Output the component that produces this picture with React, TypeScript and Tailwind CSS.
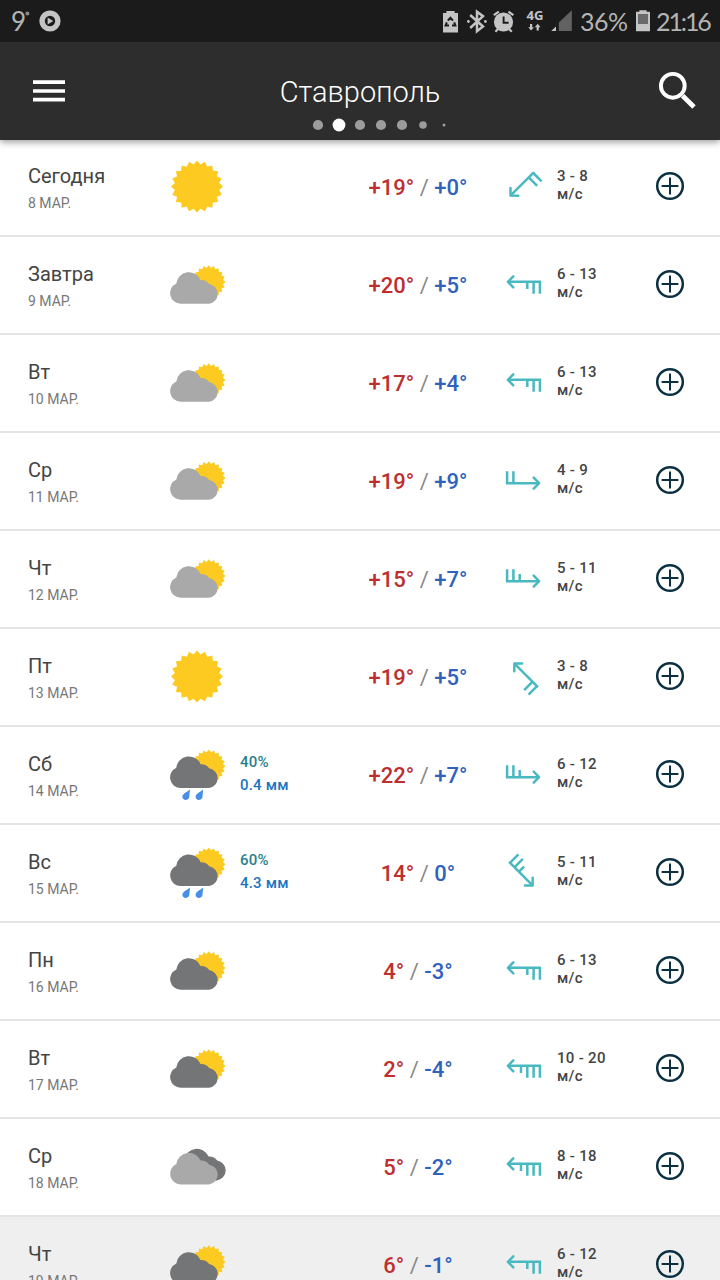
import React from "react";

type Icon = "sun" | "cloudLight" | "cloudDark" | "rain" | "clouds";

interface Day {
  name: string;
  date: string;
  icon: Icon;
  hi: string;
  lo: string;
  angle: number;
  barbs: number;
  half?: boolean;
  wind: string;
  chance?: string;
  amount?: string;
}

const days: Day[] = [
  { name: "Сегодня", date: "8 МАР.", icon: "sun", hi: "+19°", lo: "+0°", angle: -45, barbs: 2, wind: "3 - 8" },
  { name: "Завтра", date: "9 МАР.", icon: "cloudLight", hi: "+20°", lo: "+5°", angle: 0, barbs: 2, half: true, wind: "6 - 13" },
  { name: "Вт", date: "10 МАР.", icon: "cloudLight", hi: "+17°", lo: "+4°", angle: 0, barbs: 2, half: true, wind: "6 - 13" },
  { name: "Ср", date: "11 МАР.", icon: "cloudLight", hi: "+19°", lo: "+9°", angle: 180, barbs: 2, wind: "4 - 9" },
  { name: "Чт", date: "12 МАР.", icon: "cloudLight", hi: "+15°", lo: "+7°", angle: 180, barbs: 2, half: true, wind: "5 - 11" },
  { name: "Пт", date: "13 МАР.", icon: "sun", hi: "+19°", lo: "+5°", angle: 45, barbs: 2, wind: "3 - 8" },
  { name: "Сб", date: "14 МАР.", icon: "rain", hi: "+22°", lo: "+7°", angle: 180, barbs: 2, half: true, wind: "6 - 12", chance: "40%", amount: "0.4 мм" },
  { name: "Вс", date: "15 МАР.", icon: "rain", hi: "14°", lo: "0°", angle: 225, barbs: 2, half: true, wind: "5 - 11", chance: "60%", amount: "4.3 мм" },
  { name: "Пн", date: "16 МАР.", icon: "cloudDark", hi: "4°", lo: "-3°", angle: 0, barbs: 2, half: true, wind: "6 - 13" },
  { name: "Вт", date: "17 МАР.", icon: "cloudDark", hi: "2°", lo: "-4°", angle: 0, barbs: 3, half: true, wind: "10 - 20" },
  { name: "Ср", date: "18 МАР.", icon: "clouds", hi: "5°", lo: "-2°", angle: 0, barbs: 3, half: true, wind: "8 - 18" },
  { name: "Чт", date: "19 МАР.", icon: "cloudDark", hi: "6°", lo: "-1°", angle: 0, barbs: 2, half: true, wind: "6 - 12" },
];

const sunPoints = (cx: number, cy: number, outer: number, inner: number, spikes = 20) => {
  const points: string[] = [];
  for (let i = 0; i < spikes * 2; i++) {
    const r = i % 2 === 0 ? outer : inner;
    const a = (Math.PI * i) / spikes;
    points.push(`${(cx + r * Math.sin(a)).toFixed(2)},${(cy - r * Math.cos(a)).toFixed(2)}`);
  }
  return points.join(" ");
};

const Cloud = ({ color, x = 0, y = 0 }: { color: string; x?: number; y?: number }) => (
  <path
    transform={`translate(${x} ${y})`}
    fill={color}
    d="M15.6 66.8A10.7 10.7 0 0 1 11.3 46.4A12.7 12.7 0 0 1 35.6 42.9A9.8 9.8 0 0 1 44.2 47A10 10 0 0 1 44 66.8Z"
  />
);

// 64x96 canvas, one row high
const WeatherIcon = ({ icon }: { icon: Icon }) => (
  <svg width="64" height="96" viewBox="0 0 64 96" className="shrink-0">
    {icon === "sun" && <polygon fill="#fcca21" points={sunPoints(32, 47.6, 26, 22.4)} />}
    {(icon === "cloudLight" || icon === "cloudDark") && (
      <>
        <polygon fill="#fcca21" points={sunPoints(43.8, 45, 16.7, 14.3)} />
        <Cloud color={icon === "cloudLight" ? "#a9a9a9" : "#747577"} />
      </>
    )}
    {icon === "rain" && (
      <>
        <polygon fill="#fcca21" points={sunPoints(43.8, 39.3, 16.7, 14.3)} />
        <Cloud color="#747577" y={-5.7} />
        <path fill="#468fe6" d="M25 62.4L24.2 70.4C23.4 73.6 17.4 74 17.4 69.8C17.4 66.6 21.5 65.4 25 62.4Z" />
        <path fill="#468fe6" d="M38.2 62.4L37.4 70.4C36.6 73.6 30.6 74 30.6 69.8C30.6 66.6 34.7 65.4 38.2 62.4Z" />
      </>
    )}
    {icon === "clouds" && (
      <>
        <Cloud color="#747577" x={8} y={-5.4} />
        <Cloud color="#a9a9a9" y={-1.3} />
      </>
    )}
  </svg>
);

const WindBarb = ({ angle, barbs, half }: { angle: number; barbs: number; half?: boolean }) => {
  const long = Array.from({ length: barbs }, (_, i) => `M${16.4 - i * 6.3} -2.7V9.2`).join("");
  const short = half ? `M${16.4 - barbs * 6.3} -2.7V4.6` : "";
  return (
    <svg width="48" height="48" viewBox="-24.5 -23.5 48 48" className="shrink-0">
      <g transform={`rotate(${angle})`} fill="none" stroke="#49b9c1" strokeWidth="2.5">
        <path d="M17.6 -2.7H-15.4" />
        <path d="M-10.2 -8.2L-15.6 -2.7L-10.2 2.8" strokeLinecap="round" strokeLinejoin="round" />
        <path d={long + short} />
      </g>
    </svg>
  );
};

const DayRow = ({ day, pressed }: { day: Day; pressed: boolean }) => (
  <li
    className={`flex h-[98px] shrink-0 border-b-2 border-[#e4e5e6] pl-7 ${pressed ? "bg-[#efefef]" : "bg-white"}`}
  >
    <div className="w-[137px] pt-[23px] whitespace-nowrap">
      <p className="text-[20px] leading-7 text-[#444]">{day.name}</p>
      <p className="mt-[3px] text-[14px] leading-5 text-[#777]">{day.date}</p>
    </div>
    <WeatherIcon icon={day.icon} />
    <div className="w-[111px] pl-[11px] pt-[24px] text-[15px] font-medium leading-[23px] tracking-[0.2px]">
      <p className="text-[#28818c]">{day.chance}</p>
      <p className="text-[#1b74c0]">{day.amount}</p>
    </div>
    <div className="flex h-full w-[156px] items-center justify-center pt-px text-[22px] font-medium whitespace-pre">
      <span className="text-[#bd2f2f]">{day.hi}</span>
      <span className="font-normal text-[#888]"> / </span>
      <span className="text-[#2f62bd]">{day.lo}</span>
    </div>
    <div className="flex w-[57px] items-center pl-[3px] pb-px">
      <WindBarb angle={day.angle} barbs={day.barbs} half={day.half} />
    </div>
    <div className="w-[99px] pl-1 pt-[28px] text-[15px] font-medium leading-[18px] tracking-[0.3px] text-[#444]">
      <p>{day.wind}</p>
      <p>м/с</p>
    </div>
    <svg width="32" height="94" viewBox="0 0 32 94" className="ml-[2px]" fill="none" stroke="#0b3042">
      <circle cx="16" cy="47" r="12.8" strokeWidth="2.5" />
      <path d="M16 38.6V55.4M7.6 47H24.4" strokeWidth="2" />
    </svg>
  </li>
);

const StatusBar = () => (
  <div className="flex h-[42px] justify-between bg-[#1b1b1b] text-[#b4b4b4]">
    <div className="flex pl-[11px]">
      <span className="w-[17px] font-[Lato] text-[26px] leading-[43px]">9</span>
      <svg width="36" height="42" viewBox="26 0 36 42" className="-ml-[3px]">
        <circle cx="28.4" cy="13.5" r="2" fill="#888" />
        <circle cx="51" cy="21" r="7.9" fill="none" stroke="#c4c4c4" strokeWidth="5.4" />
        <path d="M48.6 17.6V24.4L54.2 21Z" fill="#c4c4c4" />
      </svg>
    </div>
    <div className="flex">
      <svg width="140" height="42" viewBox="440 0 140 42" fill="#c4c4c4">
        {/* power saving */}
        <path d="M443 13H446.4V11H454.6V13H458V32.5H443Z" />
        <path
          d="M447.8 20.6L450.4 17.8L453 20.6M454.2 22.4L455.4 25.6H452M449 25.6H445.6L446.8 22.4"
          fill="none"
          stroke="#1b1b1b"
          strokeWidth="2"
        />
        {/* bluetooth */}
        <path d="M470.2 15L483 26.5L477 31.2V11.8L483 16.2L470.2 28" fill="none" stroke="#c4c4c4" strokeWidth="2.5" />
        <circle cx="468.4" cy="21.5" r="1.4" />
        <circle cx="485.4" cy="21.5" r="1.4" />
        {/* alarm */}
        <circle cx="503.5" cy="22" r="9.6" />
        <path d="M493.8 15.2L498.8 11.6M508.4 11.6L513.4 15.2M498 29L495.4 31.8M509 29L511.8 31.8" stroke="#c4c4c4" strokeWidth="2.2" />
        <path d="M503.6 16.4V22.8H508.6" fill="none" stroke="#1b1b1b" strokeWidth="1.9" />
        <text x="526.4" y="20.3" fontFamily="Open Sans" fontSize="12.5" fontWeight="700" textLength="17" lengthAdjust="spacingAndGlyphs">4G</text>
        {/* data arrows */}
        <path d="M530 24H532.2V27.2H534L531.1 30.6L528.2 27.2H530ZM536.6 30.4H538.8V27.2H540.6L537.7 23.8L534.8 27.2H536.6Z" />
        <path d="M571.8 10.2V31H558.8V22.6Z" fill="#626262" />
        <path d="M556 26.4V31H551.2Z" />
      </svg>
      <span className="w-[48px] font-[Lato] text-[25px] leading-[42px] tracking-[-0.5px]">36%</span>
      <svg width="28" height="42" viewBox="628 0 28 42">
        <path d="M636 11.8H639.4V10.2H646.6V11.8H650V31.2H636Z" fill="#c4c4c4" />
        <path d="M638 14H648V24H638Z" fill="#6a6a6a" />
      </svg>
      <span className="w-[64px] font-[Lato] text-[25px] leading-[42px] tracking-[-2.1px]">21:16</span>
    </div>
  </div>
);

const dots = [5.1, 6.4, 5.1, 5.1, 5.1, 3.8, 1.5];

const Header = () => (
  <header className="relative shadow-[0_2px_7px_rgba(0,0,0,0.4)]">
    <StatusBar />
    <div className="flex h-[98px] justify-between bg-[#2d2d2d] text-white">
      <svg width="70" height="98" viewBox="0 42 70 98" stroke="currentColor" strokeWidth="3.7">
        <path d="M33 82.1H65M33 91H65M33 99.6H65" />
      </svg>
      <div className="flex flex-col items-center pt-[32px]">
        <h1 className="text-[29px] font-light leading-9">Ставрополь</h1>
        <svg width="180" height="16" viewBox="0 0 180 16" className="mt-[7px]">
          {dots.map((r, i) => (
            <circle key={i} cx={48 + i * 21} cy="8" r={r} fill={i === 1 ? "#fff" : "#9c9c9c"} />
          ))}
        </svg>
      </div>
      <svg width="70" height="98" viewBox="650 42 70 98" fill="none" stroke="currentColor">
        <circle cx="672.8" cy="85.8" r="11.9" strokeWidth="3.9" />
        <path d="M682.6 95.8L694 107" strokeWidth="4.8" />
      </svg>
    </div>
  </header>
);

const App: React.FC = () => (
  <div className="flex h-[1280px] w-[720px] flex-col overflow-hidden bg-white font-[Roboto,sans-serif]">
    <div className="z-10">
      <Header />
    </div>
    <ul className="-mt-px flex flex-col">
      {days.map((day, i) => (
        <DayRow key={day.date} day={day} pressed={i === days.length - 1} />
      ))}
    </ul>
  </div>
);

export default App;
